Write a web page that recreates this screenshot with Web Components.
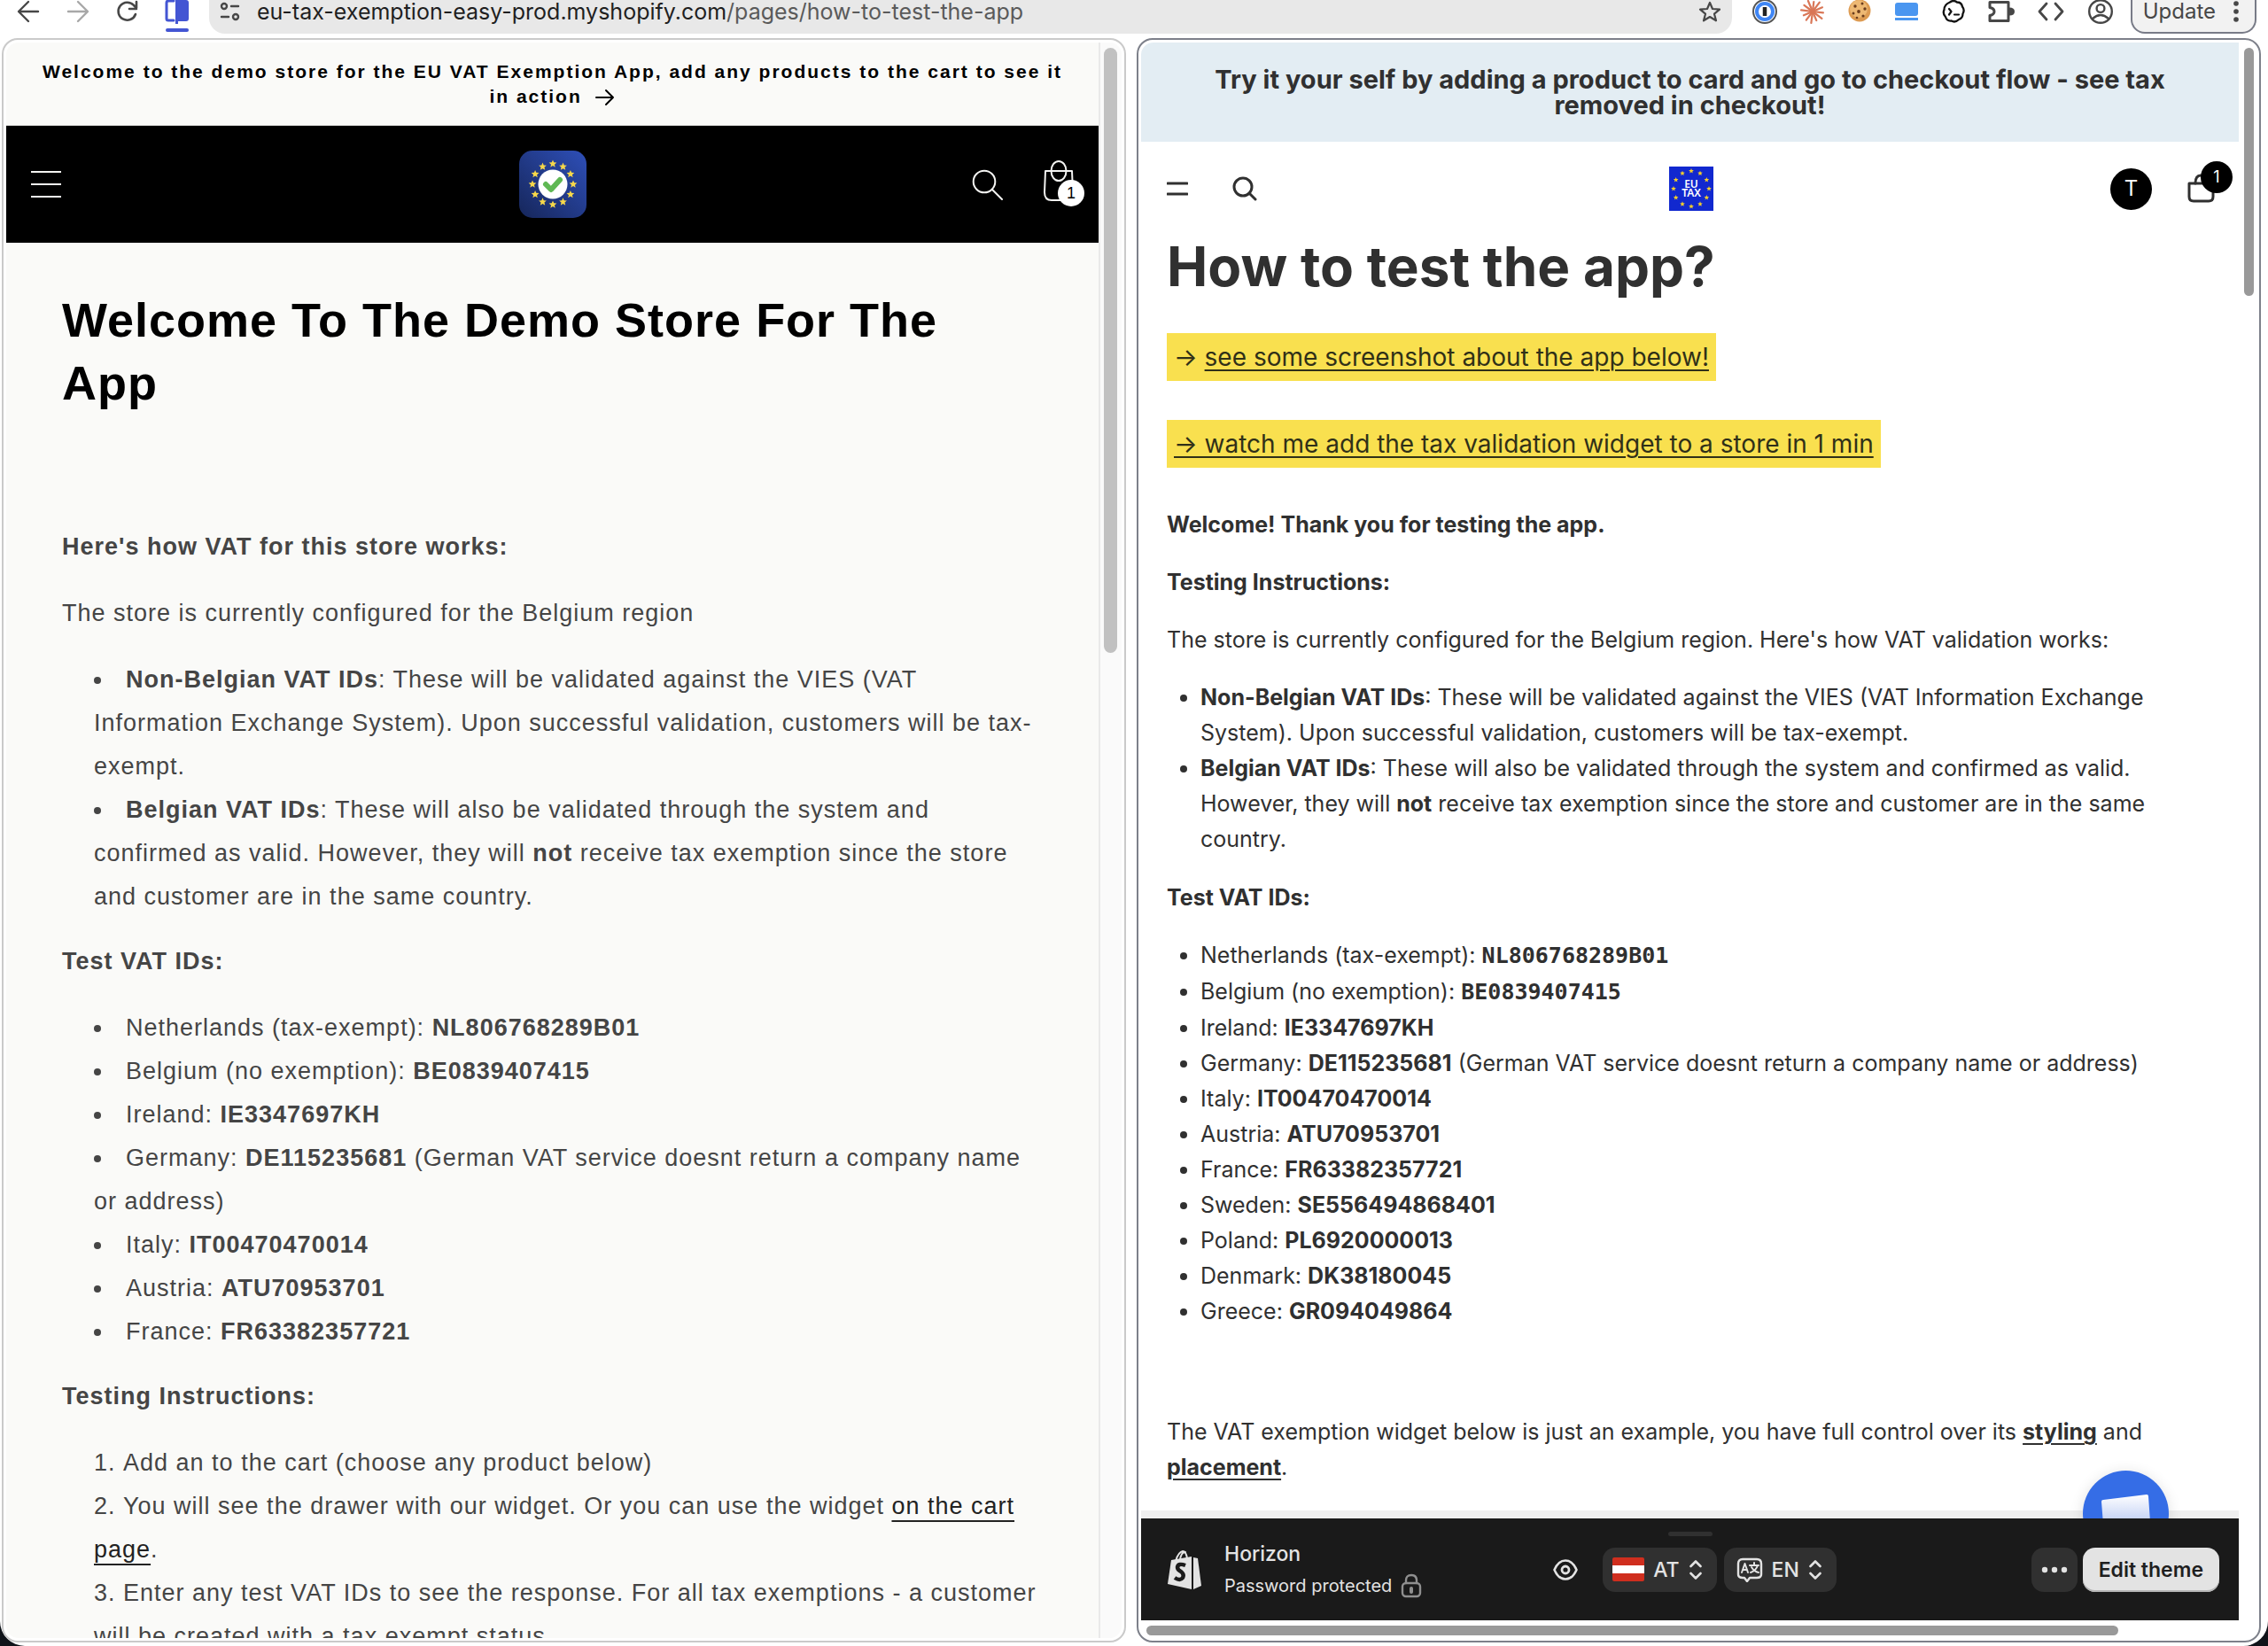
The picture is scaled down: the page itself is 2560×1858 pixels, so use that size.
<!DOCTYPE html>
<html lang="en">
<head>
<meta charset="utf-8">
<title>How to test the app</title>
<style>
    body {
        margin: 0;
        height: 100vh;
        background: #10141a;
        font-family: Inter, "Liberation Sans", sans-serif;
        color: #303030;
    }
</style>
</head>
<body>

<browser-window>
    <browser-toolbar slot="toolbar"></browser-toolbar>

    <tab-pane>
        <demo-store></demo-store>
    </tab-pane>

    <tab-pane active>
        <horizon-store></horizon-store>
    </tab-pane>
</browser-window>

<script>
(function(){

// small helper: one template per element, cloned into an open shadow root
function define(name, html, setup) {
    var template = document.createElement('template');
    template.innerHTML = html;

    window.customElements.define(name, class extends HTMLElement {
        constructor() {
            super();
            this.attachShadow({mode:'open'});
            this.shadowRoot.appendChild(template.content.cloneNode(true));
        }

        connectedCallback() {
            if (setup) setup(this, this.shadowRoot);
        }
    });
}

// star points around cx, cy
function star(cx, cy, r) {
    var pts = [];
    for (var i = 0; i < 10; i++) {
        var rad = i % 2 ? r * 0.45 : r;
        var a = Math.PI * i / 5 - Math.PI / 2;
        pts.push((cx + rad * Math.cos(a)).toFixed(2) + ',' + (cy + rad * Math.sin(a)).toFixed(2));
    }
    return `<polygon points="${pts.join(' ')}"/>`;
}

function ring(cx, cy, radius, r) {
    var out = '';
    for (var i = 0; i < 12; i++) {
        var a = Math.PI * i / 6;
        out += star(cx + radius * Math.sin(a), cy - radius * Math.cos(a), r);
    }
    return out;
}

// burst lines
function burst() {
    var out = '';
    [12, 13, 11, 13, 12, 11, 13, 12, 13, 11, 13, 12].forEach((len, i) => {
        var a = Math.PI * i / 6 + 0.12;
        out += `<path d="M14 14L${(14 + len * Math.cos(a)).toFixed(1)} ${(14 + len * Math.sin(a)).toFixed(1)}"/>`;
    });
    return out;
}

// name: [width, height, markup]
var icons = {
    back: [28, 26, '<path d="M25 13H4M14 2L3 13l11 11" stroke-width="2.4"/>'],
    forward: [28, 26, '<path d="M3 13h21M14 2l11 11-11 11" stroke-width="2.4"/>'],
    reload: [28, 26, '<path d="M23 16a10 10 0 1 1-2-10l3 3M24 2v8h-8" stroke-width="2.6"/>'],
    split: [28, 36, '<path d="M10 1H4a2 2 0 0 0-2 2v18a2 2 0 0 0 2 2h6" stroke-width="3"/><path d="M12 0h12a3 3 0 0 1 3 3v18a3 3 0 0 1-3 3h-9v3h-3z" fill="currentColor" stroke="none"/><path d="M3 34h22" stroke-width="4"/>'],
    tune: [24, 26, '<circle cx="5" cy="7" r="3"/><path d="M13 7h8M2 19h8"/><circle cx="18" cy="19" r="3"/>'],
    star: [26, 26, '<path d="M13 3l3 7 8 .7-6 5 2 7.600-7-4.300-7 4.300 2-7.600-6-5 8-.7z" stroke-width="2.2"/>'],
    onepass: [28, 28, '<circle cx="14" cy="14" r="13" fill="#fff" stroke="#555" stroke-width="2"/><circle cx="14" cy="14" r="9" stroke="#3f86f5" stroke-width="4"/><path d="M14 9v10" stroke="#222" stroke-width="4.5" stroke-linecap="butt"/>'],
    burst: [28, 28, '<g stroke="#d97757" stroke-width="2.2">' + burst() + '</g>'],
    cookie: [26, 28, '<circle cx="13" cy="13" r="12.5" fill="#dd9b52" stroke="none"/><circle cx="12" cy="11" r="10" fill="#edb873" stroke="none"/><g fill="#6b3d1e" stroke="none"><circle cx="8" cy="8" r="1.7"/><circle cx="16" cy="5" r="1.5"/><circle cx="19" cy="11" r="1.7"/><circle cx="12" cy="14" r="1.9"/><circle cx="6" cy="16" r="1.5"/><circle cx="17" cy="19" r="1.6"/><circle cx="10" cy="21" r="1.3"/></g>'],
    laptop: [28, 26, '<rect x="1" y="3" width="26" height="15" rx="3" fill="#4a96f0" stroke="none"/><path d="M1 21.5h26" stroke="#4a96f0" stroke-width="3" stroke-linecap="butt"/>'],
    gpt: [26, 28, '<path d="M9 3.500q4-3 8 0q5 0 6 5q3 4 .5 8q0 5-4.500 6.500q-4 4-8.500 1.500q-5 .5-6.500-4.500q-3.500-3.500-1.500-8q0-6 6.500-8.500z" stroke-width="2.3"/><path d="M8 11l2.500 3-2.500 3.500M14 17.500h5" stroke-width="2.2"/>'],
    puzzle: [30, 26, '<path d="M2 2.500h21v21H2v-6q5-1 5-4.500t-5-4.500z" stroke-width="3"/><path d="M24 8.500q6 0 6 4.500t-6 4.500z" fill="currentColor" stroke="none"/>'],
    code: [30, 26, '<path d="M10 4L2 13l8 9M20 4l8 9-8 9" stroke-width="2.8"/>'],
    person: [30, 28, '<circle cx="15" cy="14" r="12.8"/><circle cx="15" cy="10.5" r="4.4"/><path d="M6 22q9-8 18 0"/>'],
    kebab: [6, 26, '<g fill="currentColor" stroke="none"><circle cx="3" cy="4" r="2.8"/><circle cx="3" cy="13" r="2.8"/><circle cx="3" cy="22" r="2.8"/></g>'],

    arrow: [24, 20, '<path d="M2 10h19M13 2l8 8-8 8" stroke-width="2"/>'],
    menu: [34, 32, '<path d="M0 2h34M0 16h34M0 30h34" stroke-width="2" stroke-linecap="butt"/>'],
    glass: [36, 36, '<circle cx="14" cy="15" r="12.3" stroke-width="2"/><path d="M23 24l11 11" stroke-width="2"/>'],
    tote: [36, 48, '<path d="M3 13h30l1 24q0 9-8 9H10q-8 0-8-9z" stroke-width="2"/><ellipse cx="18" cy="13" rx="8.5" ry="11" stroke-width="2"/>'],

    lines: [24, 18, '<path d="M1 3h22M1 15h22" stroke-width="3"/>'],
    find: [28, 28, '<circle cx="12" cy="12" r="10" stroke-width="3"/><path d="M19 19l7 7" stroke-width="3"/>'],
    bag: [32, 36, '<path d="M2 12h27v15q0 5-5 5H7q-5 0-5-5z" stroke-width="3"/><path d="M9 12q0-9 6-9" stroke-width="3"/>'],

    shopify: [40, 46, '<path d="M10 13Q13 3 18 2q4 0 5 9M15 12q1-9 6-9" stroke-width="2"/><path d="M5 12l23-4v37L1 39z" fill="currentColor" stroke="none"/><path d="M30 9l5 1 4 31-9 4z" fill="currentColor" stroke="none"/><path d="M21 18q-8-3-9 2 0 3 4 5 4 3 2 7-3 4-9 0" stroke="#1a1a1a" stroke-width="4.5" stroke-linecap="butt"/>'],
    lock: [24, 28, '<rect x="2" y="11" width="20" height="15" rx="4"/><path d="M6 11V8q0-6 6-6t6 6v3"/><path d="M12 17v4" stroke-width="4"/>'],
    eye: [28, 24, '<path d="M1.500 12Q6 1.500 14 1.500T26.500 12Q22 22.500 14 22.500T1.500 12z" stroke-width="2.6"/><circle cx="14" cy="12" r="4" stroke-width="2.8"/>'],
    austria: [36, 27, '<rect width="36" height="27" rx="2" fill="#cf2e1e" stroke="none"/><rect y="9" width="36" height="9" fill="#fff" stroke="none"/>'],
    updown: [16, 24, '<path d="M2.500 8L8 2.500 13.500 8M2.500 16L8 21.500 13.500 16" stroke-width="2.6"/>'],
    translate: [30, 28, '<path d="M7 2h16q5 0 5 5v12q0 4-5 4h-8l-3 4-3-4H7q-5 0-5-4V7q0-5 5-5z"/><path d="M6 17L9.500 7 13 17M7 14h5M15 9h10M20 6v3M24 9q-2 6-8 8M17 11q3 5 8 6" stroke-width="2"/>'],
    dots: [30, 8, '<g fill="currentColor" stroke="none"><circle cx="4" cy="4" r="3.2"/><circle cx="15" cy="4" r="3.2"/><circle cx="26" cy="4" r="3.2"/></g>'],
    paper: [60, 60, '<defs><linearGradient id="g" x1="0" y1="0" x2="0" y2="1"><stop offset="0" stop-color="#fff"/><stop offset=".6" stop-color="#b9caf3"/></linearGradient></defs><path d="M2 9q0-2 2-2l49-6q2 0 2 2l4 57H6z" fill="url(#g)" stroke="none"/>'],

    euvat: [76, 76, '<defs><linearGradient id="b" x1="1" y1="0" x2="0" y2="1"><stop offset="0" stop-color="#2e4fb8"/><stop offset="1" stop-color="#16265a"/></linearGradient></defs><rect width="76" height="76" rx="15" fill="url(#b)" stroke="none"/><g fill="#f7d84a" stroke="none">' + ring(38, 38, 23, 4.6) + '</g><circle cx="38" cy="38" r="16.5" fill="#fff" stroke="none"/><path d="M30 38l6 6 10-11" stroke="#5fb854" stroke-width="6"/>'],
    eutax: [50, 50, '<rect width="50" height="50" fill="#1128cf" stroke="none"/><g fill="#f6cf2a" stroke="none">' + ring(25, 25, 20, 3) + '</g><g fill="#fff" stroke="none" font-family="Noto Sans, sans-serif" font-size="12" font-weight="600" text-anchor="middle"><text x="25" y="24">EU</text><text x="25" y="34">TAX</text></g>']
};

define('ui-icon', /*html*/`
<style>
    :host {
        display: inline-block;
        flex: none;
        line-height: 0;
    }
</style>
<span></span>
`, (el, root) => {
    var icon = icons[el.getAttribute('name')];
    root.querySelector('span').innerHTML = `<svg width="${icon[0]}" height="${icon[1]}" viewBox="0 0 ${icon[0]} ${icon[1]}" fill="none" stroke="currentColor" stroke-width="2.4" stroke-linecap="round" stroke-linejoin="round" aria-hidden="true">${icon[2]}</svg>`;
});

define('browser-window', /*html*/`
<style>
    :host {
        display: grid;
        grid-template-rows: auto 1fr;
        height: 100%;
        background: #fff;
        border-radius: 0 0 28px 28px;
        overflow: hidden;
    }

    .tabs {
        display: grid;
        grid-template-columns: 1fr 1fr;
        gap: 12px;
        min-height: 0;
        padding: 0 8px 4px 2px;
    }
</style>

<slot name="toolbar"></slot>
<div class="tabs"><slot></slot></div>
`);

define('browser-toolbar', /*html*/`
<style>
    :host {
        display: flex;
        align-items: flex-start;
        height: 43px;
        padding: 0 13px 0 18px;
        color: #474747;
        font-size: 24px;
        line-height: 26px;
    }

    button {
        all: unset;
        flex: none;
        display: flex;
        align-items: center;
        justify-content: center;
        height: 26px;
    }

    .nav {
        display: flex;
        gap: 28px;
        padding-right: 22px;
    }

    .off { color: #a8a8a8; }
    .split { color: #4355d3; height: 36px; }

    .omnibox {
        flex: 1;
        display: flex;
        align-items: center;
        gap: 18px;
        min-width: 0;
        padding: 0 12px 12px 12px;
        border-radius: 0 0 18px 18px;
        background: #e8e8e8;
    }

    .address { flex: 1; color: #1f1f1f; font-size: 25px; white-space: nowrap; }
    .address span { color: #5a5a5a; }

    .extensions {
        display: flex;
        gap: 26px;
        padding: 0 19px 0 23px;
    }

    .update {
        gap: 20px;
        padding: 0 18px 10px 12px;
        border: 2px solid #787b87;
        border-top: 0;
        border-radius: 0 0 16px 16px;
        background: #f2f2f2;
    }
</style>

<div class="nav">
    <button aria-label="Back"><ui-icon name="back"></ui-icon></button>
    <button aria-label="Forward" class="off"><ui-icon name="forward"></ui-icon></button>
    <button aria-label="Reload"><ui-icon name="reload"></ui-icon></button>
    <button aria-label="Split view" class="split"><ui-icon name="split"></ui-icon></button>
</div>
<div class="omnibox">
    <ui-icon name="tune"></ui-icon>
    <div class="address" role="textbox" aria-label="Address">eu-tax-exemption-easy-prod.myshopify.com<span>/pages/how-to-test-the-app</span></div>
    <button aria-label="Bookmark"><ui-icon name="star"></ui-icon></button>
</div>
<div class="extensions">
    <button aria-label="Passwords"><ui-icon name="onepass"></ui-icon></button>
    <button aria-label="Assistant"><ui-icon name="burst"></ui-icon></button>
    <button aria-label="Cookies"><ui-icon name="cookie"></ui-icon></button>
    <button aria-label="Screen"><ui-icon name="laptop"></ui-icon></button>
    <button aria-label="Prompt" style="color: #111"><ui-icon name="gpt"></ui-icon></button>
    <button aria-label="Extensions"><ui-icon name="puzzle"></ui-icon></button>
    <button aria-label="Code"><ui-icon name="code"></ui-icon></button>
    <button aria-label="Profile"><ui-icon name="person"></ui-icon></button>
</div>
<button class="update">Update <ui-icon name="kebab"></ui-icon></button>
`);

define('tab-pane', /*html*/`
<style>
    :host {
        display: grid;
        min-width: 0;
        min-height: 0;
        box-sizing: border-box;
        border: 2px solid #cacaca;
        border-radius: 18px;
        padding: 3px;
        background: #fff;
    }

    :host([active]) { border-color: #7d808a; }

    .clip {
        display: grid;
        min-height: 0;
        overflow: hidden;
        border-radius: 14px;
    }
</style>

<div class="clip"><slot></slot></div>
`);

define('announcement-bar', /*html*/`
<style>
    :host {
        display: block;
        text-align: center;
        font-weight: 700;
    }
</style>
<slot></slot>
`);

define('demo-store', /*html*/`
<style>
    :host {
        display: grid;
        grid-template-columns: 1fr 26px;
        min-height: 0;
        background: #fafaf8;
        color: #454545;
        font: 27px/49px "Liberation Sans", Arial, sans-serif;
        letter-spacing: 1px;
    }

    .page { min-height: 0; overflow: hidden; }

    announcement-bar {
        padding: 19px 30px 18px;
        border-bottom: 1px solid #dcdcda;
        color: #000;
        font-size: 21px;
        line-height: 28px;
        letter-spacing: 2px;
    }

    announcement-bar ui-icon { vertical-align: middle; margin-left: 6px; }

    header {
        display: grid;
        grid-template-columns: 1fr auto 1fr;
        align-items: center;
        height: 132px;
        padding: 0 27px 0 28px;
        background: #000;
        color: #f4f4f2;
    }

    button {
        all: unset;
        display: flex;
    }

    .right {
        display: flex;
        justify-content: flex-end;
        align-items: center;
        gap: 44px;
    }

    .cart { position: relative; padding-bottom: 8px; }

    .count {
        position: absolute;
        left: 17px;
        bottom: 3px;
        width: 30px;
        height: 30px;
        border-radius: 50%;
        background: #fff;
        color: #000;
        font-size: 18px;
        line-height: 30px;
        text-align: center;
        letter-spacing: 0;
    }

    main { padding: 52px 63px 0; }

    h1 {
        margin: 0 0 125px;
        color: #000;
        font-size: 54px;
        line-height: 71px;
    }

    p { margin: 0 0 26px; }
    ul, ol { margin: 0 0 24px; padding-left: 36px; list-style-position: inside; }

    a {
        color: #222;
        text-decoration-thickness: 2px;
        text-underline-offset: 7px;
        text-decoration-skip-ink: none;
    }

    .track {
        display: grid;
        grid-template-rows: 21fr 34fr;
        padding: 6px 4px;
        border-left: 2px solid #e9e9e9;
        background: #fafafa;
    }

    .thumb {
        width: 15px;
        border-radius: 8px;
        background: #c1c1c1;
    }
</style>

<div class="page">
    <announcement-bar>Welcome to the demo store for the EU VAT Exemption App, add any products to the cart to see it in action <ui-icon name="arrow"></ui-icon></announcement-bar>
    <header>
        <button aria-label="Menu"><ui-icon name="menu"></ui-icon></button>
        <ui-icon name="euvat"></ui-icon>
        <div class="right">
            <button aria-label="Search"><ui-icon name="glass"></ui-icon></button>
            <button aria-label="Cart" class="cart"><ui-icon name="tote"></ui-icon><span class="count">1</span></button>
        </div>
    </header>
    <main>
        <h1>Welcome To The Demo Store For The App</h1>
        <p><b>Here's how VAT for this store works:</b></p>
        <p>The store is currently configured for the Belgium region</p>
        <ul>
            <li><b>Non-Belgian VAT IDs</b>: These will be validated against the VIES (VAT Information Exchange System). Upon successful validation, customers will be tax-exempt.</li>
            <li><b>Belgian VAT IDs</b>: These will also be validated through the system and confirmed as valid. However, they will <b>not</b> receive tax exemption since the store and customer are in the same country.</li>
        </ul>
        <p><b>Test VAT IDs:</b></p>
        <ul>
            <li>Netherlands (tax-exempt): <b>NL806768289B01</b></li>
            <li>Belgium (no exemption): <b>BE0839407415</b></li>
            <li>Ireland: <b>IE3347697KH</b></li>
            <li>Germany: <b>DE115235681</b> (German VAT service doesnt return a company name or address)</li>
            <li>Italy: <b>IT00470470014</b></li>
            <li>Austria: <b>ATU70953701</b></li>
            <li>France: <b>FR63382357721</b></li>
        </ul>
        <p><b>Testing Instructions:</b></p>
        <ol>
            <li>Add an to the cart (choose any product below)</li>
            <li>You will see the drawer with our widget. Or you can use the widget <a href="#cart">on the cart page</a>.</li>
            <li>Enter any test VAT IDs to see the response. For all tax exemptions - a customer will be created with a tax exempt status</li>
        </ol>
    </main>
</div>
<div class="track"><div class="thumb"></div></div>
`);

define('horizon-store', /*html*/`
<style>
    :host {
        display: grid;
        grid-template-columns: 1fr 20px;
        grid-template-rows: 1fr auto 20px;
        min-height: 0;
        font-size: 25px;
        line-height: 40px;
    }

    /* the footer strip peeks out above the theme bar */
    .page {
        position: relative;
        min-height: 0;
        overflow: hidden;
        background: linear-gradient(#efefef, #efefef) bottom / 100% 9px no-repeat;
    }

    announcement-bar {
        padding: 27px 80px;
        background: #e3edf3;
        font-size: 29px;
        line-height: 29px;
    }

    header {
        display: grid;
        grid-template-columns: 1fr auto 1fr;
        align-items: center;
        height: 106px;
        padding: 0 26px 0 29px;
    }

    button {
        all: unset;
        display: flex;
    }

    .left, .right {
        display: flex;
        align-items: center;
        gap: 50px;
    }

    .right { justify-content: flex-end; gap: 40px; }

    .avatar {
        width: 47px;
        height: 47px;
        border-radius: 50%;
        background: #000;
        color: #fff;
        justify-content: center;
        align-items: center;
        font-size: 24px;
    }

    .cart { position: relative; }

    .count {
        position: absolute;
        left: 15px;
        top: -13px;
        width: 36px;
        height: 36px;
        border-radius: 50%;
        background: #000;
        color: #fff;
        font-size: 18px;
        line-height: 36px;
        text-align: center;
    }

    main { padding: 0 90px 0 29px; }

    h1 {
        margin: 0 0 40px;
        font-size: 62px;
        line-height: 70px;
    }

    .note { margin: 0 0 44px; }

    mark {
        display: inline-block;
        padding: 0 8px;
        background: #f9e04f;
        color: #303018;
        font-size: 28px;
        line-height: 54px;
    }

    a {
        color: inherit;
        text-decoration-thickness: 2px;
        text-underline-offset: 4px;
    }

    p { margin: 0 0 25px; }
    ul { margin: 0 0 26px; padding-left: 38px; }
    ul.ids { margin-bottom: 96px; }
    code { font-family: "DejaVu Sans Mono", monospace; font-size: 25px; line-height: 41px; }

    .chat {
        position: absolute;
        right: 79px;
        bottom: -43px;
        width: 97px;
        height: 97px;
        border-radius: 50%;
        background: #356de6;
        box-shadow: 0 2px 16px rgba(0, 0, 0, .12);
        box-sizing: border-box;
        padding: 26px 0 0 19px;
    }

    .vtrack { grid-row: span 2; padding: 6px 6px 0; }
    .vtrack div { width: 11px; height: 280px; border-radius: 6px; background: #999; }
    .htrack { grid-column: span 2; padding: 6px; }
    .htrack div { width: 88%; height: 11px; border-radius: 6px; background: #999; }
</style>

<div class="page">
    <announcement-bar>Try it your self by adding a product to card and go to checkout flow - see tax removed in checkout!</announcement-bar>
    <header>
        <div class="left">
            <button aria-label="Menu"><ui-icon name="lines"></ui-icon></button>
            <button aria-label="Search"><ui-icon name="find"></ui-icon></button>
        </div>
        <ui-icon name="eutax"></ui-icon>
        <div class="right">
            <button class="avatar" aria-label="Account">T</button>
            <button aria-label="Cart" class="cart"><ui-icon name="bag"></ui-icon><span class="count">1</span></button>
        </div>
    </header>
    <main>
        <h1>How to test the app?</h1>
        <div class="note"><mark>→ <a href="#screenshots">see some screenshot about the app below!</a></mark></div>
        <div class="note"><mark><a href="#video">→ watch me add the tax validation widget to a store in 1 min</a></mark></div>
        <p><b>Welcome! Thank you for testing the app.</b></p>
        <p><b>Testing Instructions:</b></p>
        <p>The store is currently configured for the Belgium region. Here's how VAT validation works:</p>
        <ul>
            <li><b>Non-Belgian VAT IDs</b>: These will be validated against the VIES (VAT Information Exchange System). Upon successful validation, customers will be tax-exempt.</li>
            <li><b>Belgian VAT IDs</b>: These will also be validated through the system and confirmed as valid. However, they will <b>not</b> receive tax exemption since the store and customer are in the same country.</li>
        </ul>
        <p><b>Test VAT IDs:</b></p>
        <ul class="ids">
            <li>Netherlands (tax-exempt): <b><code>NL806768289B01</code></b></li>
            <li>Belgium (no exemption): <b><code>BE0839407415</code></b></li>
            <li>Ireland: <b>IE3347697KH</b></li>
            <li>Germany: <b>DE115235681</b> (German VAT service doesnt return a company name or address)</li>
            <li>Italy: <b>IT00470470014</b></li>
            <li>Austria: <b>ATU70953701</b></li>
            <li>France: <b>FR63382357721</b></li>
            <li>Sweden: <b>SE556494868401</b></li>
            <li>Poland: <b>PL6920000013</b></li>
            <li>Denmark: <b>DK38180045</b></li>
            <li>Greece: <b>GR094049864</b></li>
        </ul>
        <p>The VAT exemption widget below is just an example, you have full control over its <b><a href="#styling">styling</a></b> and <b><a href="#placement">placement</a></b>.</p>
    </main>
    <button class="chat" aria-label="Chat"><ui-icon name="paper"></ui-icon></button>
</div>
<div class="vtrack"><div></div></div>
<theme-bar></theme-bar>
<div class="htrack"><div></div></div>
`);

define('theme-bar', /*html*/`
<style>
    :host {
        display: grid;
        grid-template-columns: 1fr auto 1fr;
        align-items: center;
        position: relative;
        height: 115px;
        padding: 0 22px 0 29px;
        background: #1a1a1a;
        color: #e3e3e3;
        font-size: 23px;
        font-weight: 500;
        line-height: 36px;
    }

    .handle {
        position: absolute;
        left: calc(50% - 25px);
        top: 15px;
        width: 50px;
        height: 5px;
        border-radius: 3px;
        background: #303030;
    }

    .theme, .pickers, .actions, .state {
        display: flex;
        align-items: center;
    }

    .theme { gap: 25px; }
    .state { gap: 10px; font-size: 20px; font-weight: 400; }
    .state ui-icon { color: #8f8f8f; }
    .pickers { gap: 8px; margin-right: 16px; }
    .actions { gap: 6px; justify-content: flex-end; }

    button {
        all: unset;
        display: flex;
        align-items: center;
        gap: 10px;
        height: 50px;
        padding: 0 16px 0 11px;
        border-radius: 14px;
        background: #303030;
    }

    button.preview { background: none; padding: 0 20px; }
    button.lang { padding-left: 14px; }
    button.more { padding: 0 11px; }
    button.edit {
        padding: 0 18px;
        background: #e3e3e3;
        color: #1f1f1f;
        font-weight: 600;
        box-shadow: inset 0 -2px 0 #b5b5b5;
    }
</style>

<div class="handle"></div>
<div class="theme">
    <ui-icon name="shopify"></ui-icon>
    <div>
        <div>Horizon</div>
        <div class="state">Password protected <ui-icon name="lock"></ui-icon></div>
    </div>
</div>
<div class="pickers">
    <button class="preview" aria-label="Preview"><ui-icon name="eye"></ui-icon></button>
    <button><ui-icon name="austria"></ui-icon>AT <ui-icon name="updown"></ui-icon></button>
    <button class="lang"><ui-icon name="translate"></ui-icon>EN <ui-icon name="updown"></ui-icon></button>
</div>
<div class="actions">
    <button class="more" aria-label="More"><ui-icon name="dots"></ui-icon></button>
    <button class="edit">Edit theme</button>
</div>
`);

})();
</script>
</body>
</html>
